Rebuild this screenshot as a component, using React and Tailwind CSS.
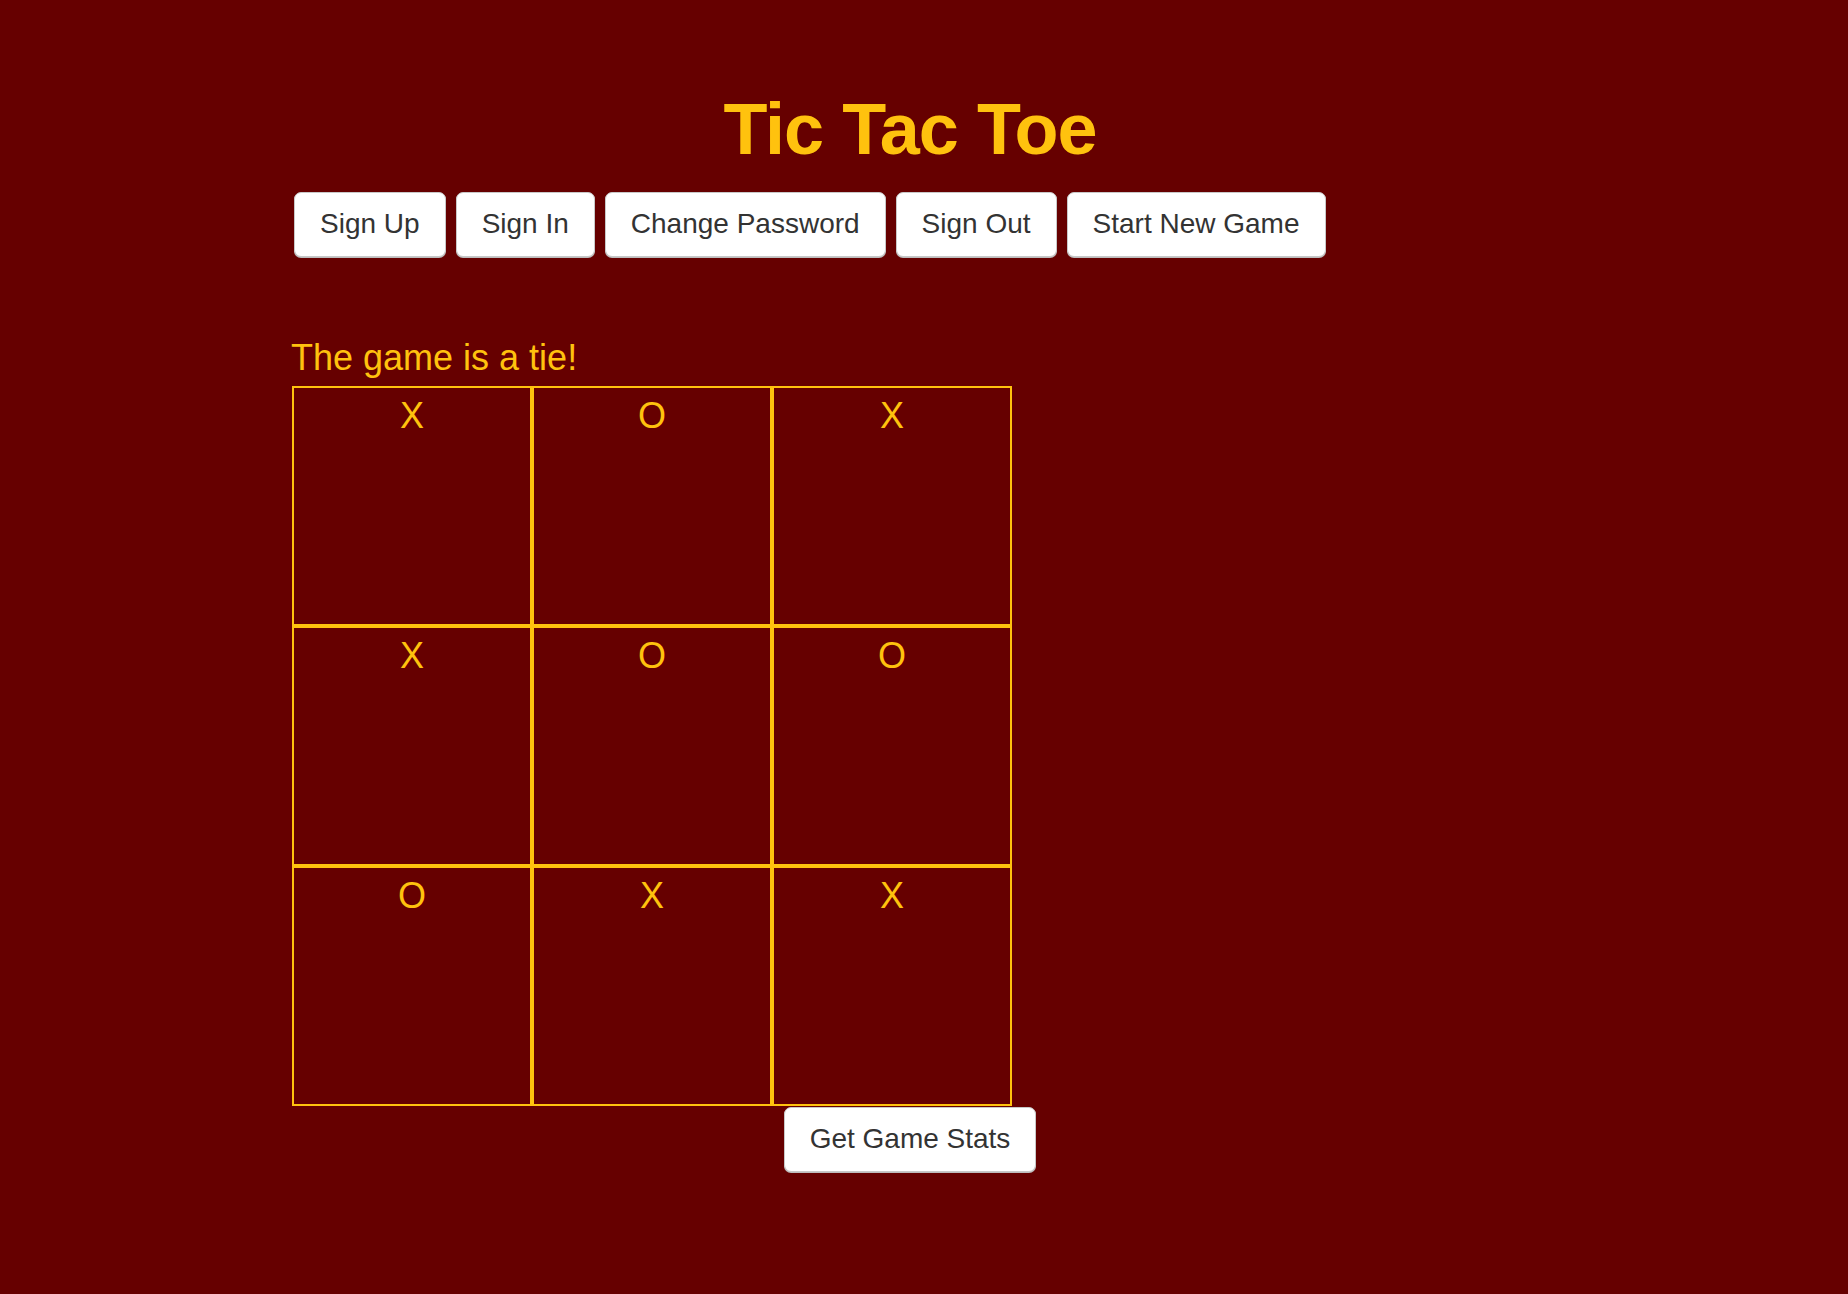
import React from "react";

const board = ["X", "O", "X", "X", "O", "O", "O", "X", "X"];
const actions = ["Sign Up", "Sign In", "Change Password", "Sign Out", "Start New Game"];

const Btn = ({ children }) => (
  <button className="bg-white border border-[#c8c8c8] rounded-[7px] px-[25px] pt-[11px] pb-[12px] text-[28px] leading-[40px] text-[#333] font-['Liberation_Sans',Arial,sans-serif] whitespace-nowrap shadow-[0_1px_0_#bdbdbd]">
    {children}
  </button>
);

const App = () => {
  return (
    <div className="min-h-screen w-full bg-[#660000] font-['Liberation_Sans',Arial,sans-serif] pr-[28px] pt-[93px]">
      <h1 className="text-center text-[72px] leading-none font-bold tracking-[-1px] text-[#ffc20e]">
        Tic Tac Toe
      </h1>

      {/* auth + game controls */}
      <div className="flex gap-[10px] pl-[294px] mt-[27px]">
        {actions.map((a) => (
          <Btn key={a}>{a}</Btn>
        ))}
      </div>

      <p className="pl-[291px] mt-[75px] text-[36px] leading-[1.42857] text-[#ffc20e]">
        The game is a tie!
      </p>

      <div className="grid grid-cols-3 w-[720px] ml-[292px] mt-[3px]">
        {board.map((v, i) => (
          <div
            key={i}
            className="h-[240px] border-2 border-[#ffc20e] pt-[2px] text-center text-[36px] leading-[1.42857] text-[#ffc20e]"
          >
            {v}
          </div>
        ))}
      </div>

      <div className="flex justify-center mt-[1px]">
        <Btn>Get Game Stats</Btn>
      </div>
    </div>
  );
};

export default App;
